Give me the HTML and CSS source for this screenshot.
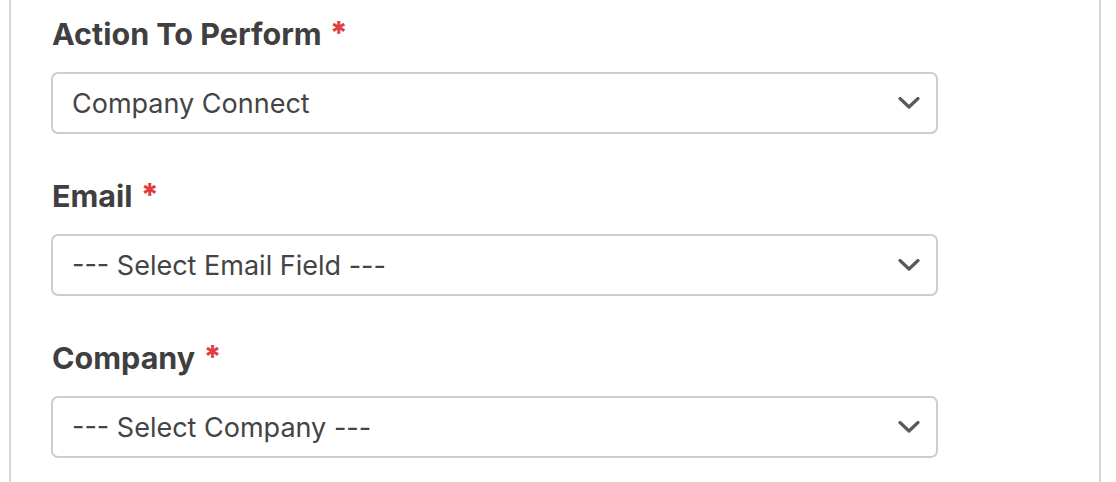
FILE: index.html
```html
<!DOCTYPE html>
<html lang="en">
<head>
<meta charset="utf-8">
<title>Action settings</title>
<link rel="stylesheet" href="styles.css">
</head>
<body>
<div class="panel">
  <div class="field">
    <div class="label">Action To Perform <span class="req">*</span></div>
    <div class="select" role="combobox">
      <span class="value">Company Connect</span>
      <svg class="chev" width="22" height="12" viewBox="0 0 22 12"><path d="M2 1.5 L11 10 L20 1.5" fill="none" stroke="#5a5a5a" stroke-width="3.2" stroke-linecap="round" stroke-linejoin="round"/></svg>
    </div>
  </div>
  <div class="field">
    <div class="label">Email <span class="req">*</span></div>
    <div class="select" role="combobox">
      <span class="value">--- Select Email Field ---</span>
      <svg class="chev" width="22" height="12" viewBox="0 0 22 12"><path d="M2 1.5 L11 10 L20 1.5" fill="none" stroke="#5a5a5a" stroke-width="3.2" stroke-linecap="round" stroke-linejoin="round"/></svg>
    </div>
  </div>
  <div class="field">
    <div class="label">Company <span class="req">*</span></div>
    <div class="select" role="combobox">
      <span class="value">--- Select Company ---</span>
      <svg class="chev" width="22" height="12" viewBox="0 0 22 12"><path d="M2 1.5 L11 10 L20 1.5" fill="none" stroke="#5a5a5a" stroke-width="3.2" stroke-linecap="round" stroke-linejoin="round"/></svg>
    </div>
  </div>
</div>
</body>
</html>
```

FILE: styles.css
```css
html, body {
  margin: 0;
  padding: 0;
  background: #fff;
}
body {
  font-family: "Inter", "Liberation Sans", sans-serif;
  color: #444;
}
.panel {
  margin-left: 9px;
  width: 1092px;
  height: 482px;
  box-sizing: border-box;
  border-left: 2px solid #d6d6d6;
  border-right: 2px solid #d6d6d6;
  padding: 16px 0 0 40px;
  display: flex;
  flex-direction: column;
  gap: 44px;
}
.field {
  display: flex;
  flex-direction: column;
  gap: 20px;
}
.label {
  font-size: 30.5px;
  line-height: 36px;
  height: 36px;
  font-weight: 700;
  color: #3f3f3f;
  padding-left: 1px;
}
.req {
  color: #e03e3e;
  font-size: 31px;
  font-weight: 800;
  line-height: 0;
  vertical-align: 1px;
  margin-left: 1px;
}
.select {
  width: 887px;
  height: 62px;
  box-sizing: border-box;
  border: 2px solid #cdcdcd;
  border-radius: 7px;
  display: flex;
  align-items: center;
  justify-content: space-between;
  padding: 0 16px 0 19px;
  background: #fff;
}
.value {
  font-size: 27px;
  color: #444;
}
.chev {
  display: block;
}
```
